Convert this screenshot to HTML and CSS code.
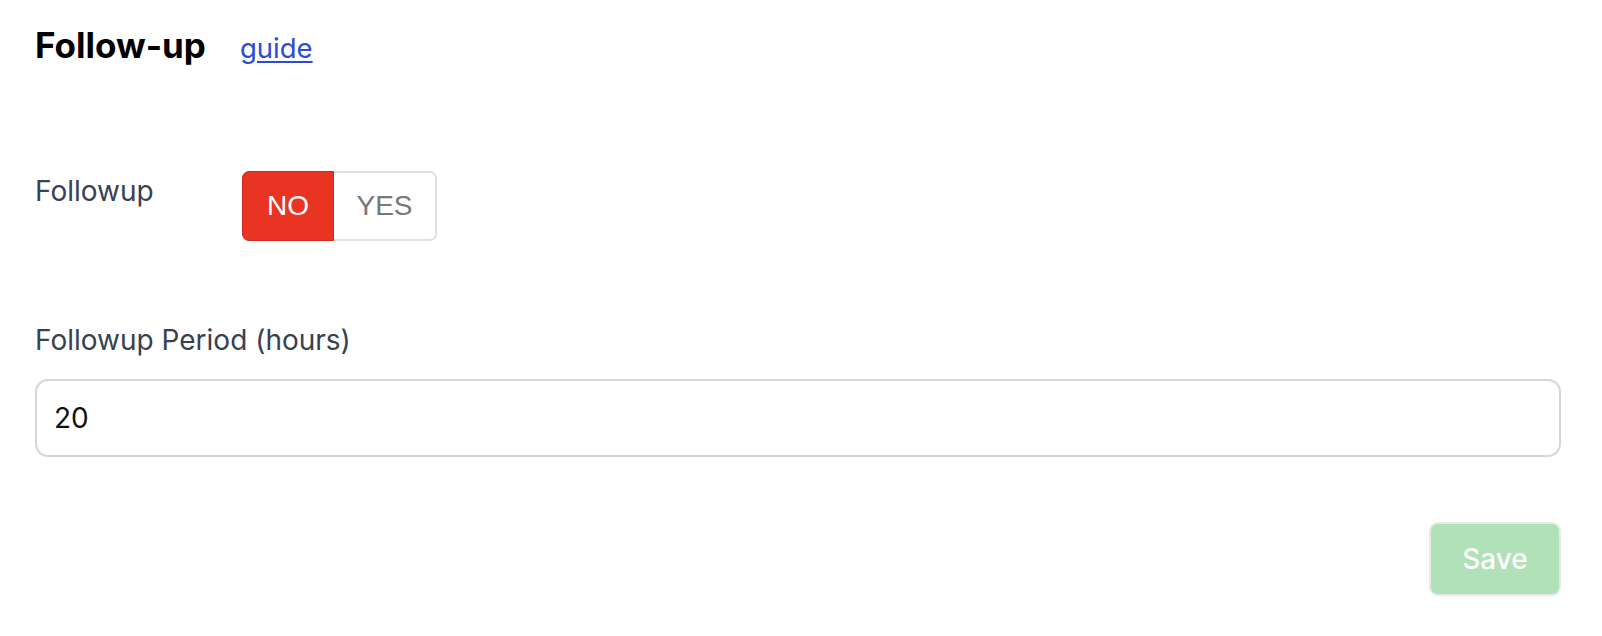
FILE: index.html
```html
<!DOCTYPE html>
<html>
<head>
<meta charset="utf-8">
<link rel="stylesheet" href="styles.css">
</head>
<body>
<div class="page">
  <div class="header">
    <h1 class="title">Follow-up</h1>
    <a class="guide" href="#">guide</a>
  </div>
  <div class="row-toggle">
    <div class="label-side">Followup</div>
    <div class="toggle">
      <button class="seg seg-no">NO</button>
      <button class="seg seg-yes">YES</button>
    </div>
  </div>
  <div class="field">
    <label class="field-label">Followup Period (hours)</label>
    <input class="input" type="text" value="20">
  </div>
  <div class="actions">
    <button class="save" disabled>Save</button>
  </div>
</div>
</body>
</html>
```
FILE: styles.css
```css
html, body {
  margin: 0;
  padding: 0;
  background: #ffffff;
}
body {
  font-family: Inter, "Noto Sans", sans-serif;
  color: #374151;
}
.page {
  padding: 20px 41px 0 35px;
}
.header {
  display: flex;
  align-items: baseline;
  gap: 34px;
  height: 50px;
}
.title {
  margin: 0;
  font-size: 35px;
  font-weight: 700;
  color: #000;
  line-height: 50px;
}
.guide {
  font-size: 27.5px;
  color: #2b4bd6;
  text-decoration: underline;
  text-underline-offset: 3px;
  text-decoration-thickness: 2px;
}
.row-toggle {
  display: flex;
  align-items: flex-start;
  margin-top: 101px;
}
.label-side {
  width: 207px;
  font-size: 28px;
  line-height: 40px;
  color: #374151;
}
.toggle {
  display: flex;
  height: 70px;
}
.seg {
  font-family: "Liberation Sans", Arial, sans-serif;
  font-size: 28px;
  height: 70px;
  margin: 0;
  padding: 0;
  cursor: pointer;
}
.seg-no {
  width: 92px;
  background: #e93323;
  color: #fff;
  border: 1px solid #d22a1c;
  border-radius: 7px 0 0 7px;
}
.seg-yes {
  width: 103px;
  background: #fff;
  color: #777;
  border: 2px solid #e0e0e0;
  border-left: none;
  border-radius: 0 7px 7px 0;
}
.field {
  margin-top: 79px;
}
.field-label {
  display: block;
  font-size: 28px;
  line-height: 40px;
  color: #374151;
}
.input {
  display: block;
  box-sizing: border-box;
  width: 100%;
  height: 78px;
  margin-top: 19px;
  padding: 0 17px;
  font-family: Inter, sans-serif;
  font-size: 28px;
  color: #111;
  border: 2px solid #d4d6dc;
  border-radius: 13px;
  background: #fff;
  outline: none;
}
.actions {
  display: flex;
  justify-content: flex-end;
  margin-top: 65px;
}
.save {
  width: 132px;
  height: 74px;
  padding: 0;
  font-family: Inter, sans-serif;
  font-size: 28px;
  font-weight: 500;
  color: #fff;
  background: #b0e1b7;
  border: 2px solid #e6ebe8;
  border-radius: 9px;
}
```
